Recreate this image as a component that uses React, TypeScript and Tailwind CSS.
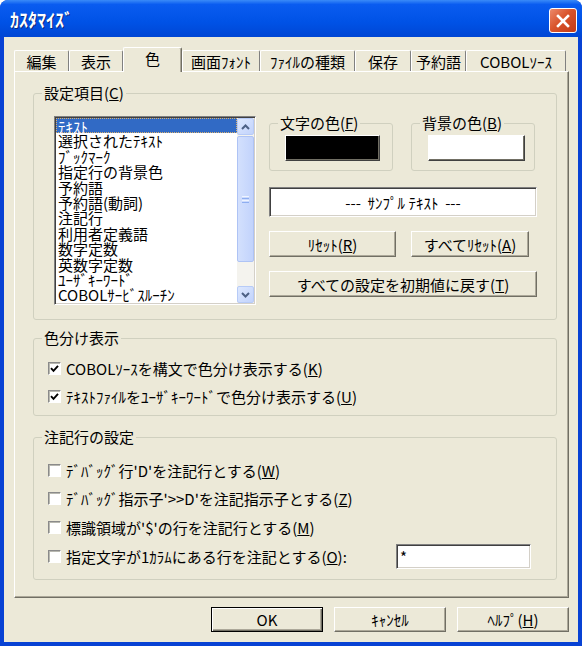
import type { ReactNode } from 'react';

const raised =
  'border border-t-white border-l-white border-r-[#716f64] border-b-[#716f64] shadow-[inset_-1px_-1px_0_#aca899]';
const sunken =
  'border border-t-[#808080] border-l-[#808080] border-r-white border-b-white shadow-[inset_1px_1px_0_#404040,inset_-1px_-1px_0_#d4d0c8]';

const tabs = [
  { label: '編集', w: 'w-[55px]' },
  { label: '表示', w: 'w-[54px]' },
  { label: '色', w: 'w-[59px]', active: true },
  { label: '画面ﾌｫﾝﾄ', w: 'w-[78px]' },
  { label: 'ﾌｧｲﾙの種類', w: 'w-[95px]' },
  { label: '保存', w: 'w-[56px]' },
  { label: '予約語', w: 'w-[55px]' },
  { label: 'COBOLｿｰｽ', w: 'w-[100px]' },
];

const items = [
  'ﾃｷｽﾄ',
  '選択されたﾃｷｽﾄ',
  'ﾌﾞｯｸﾏｰｸ',
  '指定行の背景色',
  '予約語',
  '予約語(動詞)',
  '注記行',
  '利用者定義語',
  '数字定数',
  '英数字定数',
  'ﾕｰｻﾞｷｰﾜｰﾄﾞ',
  'COBOLｻｰﾋﾞｽﾙｰﾁﾝ',
  '組込み関数',
];

function Group({ title, className, children }: { title: ReactNode; className: string; children: ReactNode }) {
  return (
    <fieldset className={`border border-[#d0d0bf] rounded-[3px] ${className}`}>
      <legend className="ml-[8px] px-[2px] text-[15px] leading-[16px]">{title}</legend>
      {children}
    </fieldset>
  );
}

function Btn({ children, className }: { children: ReactNode; className: string }) {
  return (
    <div className={`${raised} bg-[#ece9d8] flex items-center justify-center text-[15px] leading-none ${className}`}>
      {children}
    </div>
  );
}

function Check({ checked, children, className = '' }: { checked?: boolean; children: ReactNode; className?: string }) {
  return (
    <div className={`flex items-center h-[20px] ${className}`}>
      <span className="w-[13px] h-[13px] bg-white border border-t-[#8a8a8a] border-l-[#8a8a8a] border-r-white border-b-white shadow-[inset_1px_1px_0_#b8b8b0] flex items-center justify-center shrink-0">
        {checked && (
          <svg width="9" height="9" viewBox="0 0 9 9">
            <path d="M1 4.2 L3.5 6.8 L8 1.8" stroke="#000" strokeWidth="1.9" fill="none" />
          </svg>
        )}
      </span>
      <span className="ml-[5px] text-[15px] leading-none whitespace-nowrap">{children}</span>
    </div>
  );
}

function Chevron({ down }: { down?: boolean }) {
  return (
    <svg width="9" height="6" viewBox="0 0 9 6">
      <path d={down ? 'M1 1 L4.5 4.5 L8 1' : 'M1 5 L4.5 1.5 L8 5'} stroke="#4d6185" strokeWidth="2" fill="none" />
    </svg>
  );
}

export default function App() {
  return (
    <div className="w-[585px] h-[649px] bg-white font-['Noto_Sans_CJK_JP',sans-serif] text-black">
      <div className="w-[582px] h-[646px] rounded-t-[8px] bg-[#0842d4] flex flex-col">
        {/* title bar */}
        <div className="h-[37px] rounded-t-[8px] bg-[linear-gradient(to_bottom,#3a8bf8,#0a5cf0_12%,#0052e6_60%,#0046d4)] flex justify-between pl-[10px] pr-[5px]">
          <span className="pt-[10px] text-[18px] leading-none font-bold text-white [text-shadow:1px_1px_0_#0a2a80]">ｶｽﾀﾏｲｽﾞ</span>
          <div className="mt-[8px] w-[28px] h-[25px] rounded-[3px] border border-white bg-[linear-gradient(135deg,#ec8a6c,#d9542c_45%,#c33a16)] flex items-center justify-center">
            <svg width="14" height="14" viewBox="0 0 14 14">
              <path d="M2 2 L12 12 M12 2 L2 12" stroke="#fff" strokeWidth="2.6" strokeLinecap="square" />
            </svg>
          </div>
        </div>

        {/* body */}
        <div className="mx-[4px] h-[605px] bg-[#ece9d8] flex flex-col">
          <div className="flex items-end h-[24px] mt-[10px] ml-[10px]">
            {tabs.map((t) =>
              t.active ? (
                <div
                  key={t.label}
                  className={`${t.w} h-[25px] -mb-[1px] relative z-10 bg-[#ece9d8] border-l border-t border-r border-l-white border-t-white border-r-[#716f64] shadow-[inset_-1px_0_0_#aca899] rounded-t-[2px] flex items-center justify-center text-[15px] leading-none pb-[3px]`}
                >
                  {t.label}
                </div>
              ) : (
                <div
                  key={t.label}
                  className={`${t.w} h-[21px] bg-[#ece9d8] border-l border-t border-r border-l-white border-t-white border-r-[#808080] rounded-t-[2px] flex items-center justify-center text-[15px] leading-none`}
                >
                  {t.label}
                </div>
              )
            )}
          </div>

          {/* tab panel */}
          <div className="ml-[10px] w-[555px] h-[527px] border border-l-white border-t-white border-r-[#716f64] border-b-[#716f64] shadow-[inset_-1px_-1px_0_#aca899] flex flex-col pl-[18px]">
            <Group
              className="mt-[13px] w-[524px] h-[235px]"
              title={
                <>
                  設定項目(<u>C</u>)
                </>
              }
            >
              <div className="flex pl-[20px] pt-[15px]">
                {/* list box */}
                <div className={`${sunken} w-[202px] h-[189px] bg-white flex p-[1px]`}>
                  <div className="flex-1 overflow-hidden text-[15px] leading-[15.4px]">
                    {items.map((it, i) =>
                      i === 0 ? (
                        <div key={it} className="h-[15.4px] bg-[#316ac5] text-white pl-[1px] border border-dotted border-[#d8b070] whitespace-nowrap">
                          {it}
                        </div>
                      ) : (
                        <div key={it} className="h-[15.4px] pl-[2px] whitespace-nowrap">
                          {it}
                        </div>
                      )
                    )}
                  </div>
                  <div className="w-[17px] flex flex-col bg-[#f4f3ee]">
                    <div className="h-[17px] rounded-[2px] bg-[linear-gradient(135deg,#dde8fe,#c2d3fc)] border border-[#b7cbf7] flex items-center justify-center">
                      <Chevron />
                    </div>
                    <div className="h-[126px] mt-[1px] rounded-[2px] bg-[linear-gradient(90deg,#d3e0fd,#c2d3fc)] border border-[#aec3f5] flex flex-col items-center justify-center gap-[1px]">
                      <span className="w-[7px] h-[1px] bg-[#eef4ff]" />
                      <span className="w-[7px] h-[1px] bg-[#8eaef0]" />
                      <span className="w-[7px] h-[1px] bg-[#eef4ff]" />
                      <span className="w-[7px] h-[1px] bg-[#8eaef0]" />
                    </div>
                    <div className="flex-1" />
                    <div className="h-[17px] rounded-[2px] bg-[linear-gradient(135deg,#dde8fe,#c2d3fc)] border border-[#b7cbf7] flex items-center justify-center">
                      <Chevron down />
                    </div>
                  </div>
                </div>

                {/* right column */}
                <div className="ml-[13px] w-[268px] -mt-[1px] flex flex-col">
                  <div className="flex gap-[18px]">
                    <Group
                      className="w-[124px] h-[56px]"
                      title={
                        <>
                          文字の色(<u>F</u>)
                        </>
                      }
                    >
                      <div className="pl-[15px] pt-[4px]">
                        <div className="w-[95px] h-[26px] bg-black border border-t-white border-l-white border-r-[#404040] border-b-[#404040] shadow-[inset_-1px_-1px_0_#716f64]" />
                      </div>
                    </Group>
                    <Group
                      className="w-[124px] h-[56px]"
                      title={
                        <>
                          背景の色(<u>B</u>)
                        </>
                      }
                    >
                      <div className="pl-[16px] pt-[4px]">
                        <div className="w-[97px] h-[26px] bg-white border border-t-white border-l-white border-r-[#404040] border-b-[#404040] shadow-[inset_-1px_-1px_0_#716f64]" />
                      </div>
                    </Group>
                  </div>
                  <div className={`${sunken} mt-[16px] h-[30px] bg-white flex items-center justify-center text-[15px] leading-none whitespace-pre`}>
                    {'---  ｻﾝﾌﾟﾙ ﾃｷｽﾄ  ---'}
                  </div>
                  <div className="mt-[14px] flex gap-[15px]">
                    <Btn className="w-[127px] h-[26px]">
                      ﾘｾｯﾄ(<u>R</u>)
                    </Btn>
                    <Btn className="w-[118px] h-[26px]">
                      すべてﾘｾｯﾄ(<u>A</u>)
                    </Btn>
                  </div>
                  <Btn className="mt-[14px] w-[268px] h-[26px]">
                    すべての設定を初期値に戻す(<u>T</u>)
                  </Btn>
                </div>
              </div>
            </Group>

            <Group className="mt-[10px] w-[524px] h-[86px]" title="色分け表示">
              <div className="pl-[14px] pt-[12px] flex flex-col gap-[8px]">
                <Check checked>
                  COBOLｿｰｽを構文で色分け表示する(<u>K</u>)
                </Check>
                <Check checked>
                  ﾃｷｽﾄﾌｧｲﾙをﾕｰｻﾞｷｰﾜｰﾄﾞで色分け表示する(<u>U</u>)
                </Check>
              </div>
            </Group>

            <Group className="mt-[13px] w-[524px] h-[151px]" title="注記行の設定">
              <div className="pl-[14px] pt-[15px] flex flex-col">
                <Check>
                  ﾃﾞﾊﾞｯｸﾞ行'D'を注記行とする(<u>W</u>)
                </Check>
                <Check className="mt-[8px]">
                  ﾃﾞﾊﾞｯｸﾞ指示子'&gt;&gt;D'を注記指示子とする(<u>Z</u>)
                </Check>
                <Check className="mt-[9px]">
                  標識領域が'$'の行を注記行とする(<u>M</u>)
                </Check>
                <div className="mt-[9px] flex items-center h-[20px]">
                  <Check>
                    指定文字が1ｶﾗﾑにある行を注記とする(<u>O</u>):
                  </Check>
                  <div className={`${sunken} ml-auto mr-[25px] w-[135px] h-[25px] bg-white flex items-center pl-[3px] text-[15px] leading-none shrink-0`}>
                    *
                  </div>
                </div>
              </div>
            </Group>
          </div>

          {/* dialog buttons */}
          <div className="flex justify-end gap-[11px] mt-[9px] pr-[9px]">
            <div className="w-[112px] h-[25px] bg-[#ece9d8] border border-black shadow-[inset_1px_1px_0_#fff,inset_-1px_-1px_0_#716f64,inset_-2px_-2px_0_#aca899] flex items-center justify-center text-[15px] leading-none">
              OK
            </div>
            <Btn className="w-[112px] h-[25px]">ｷｬﾝｾﾙ</Btn>
            <Btn className="w-[112px] h-[25px]">
              ﾍﾙﾌﾟ(<u>H</u>)
            </Btn>
          </div>
        </div>
      </div>
    </div>
  );
}
